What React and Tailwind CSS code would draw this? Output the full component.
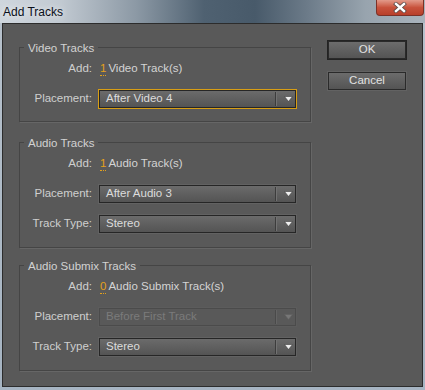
import React from 'react';

const font = { fontFamily: '"Liberation Sans", Arial, sans-serif' };

const Arrow = ({ disabled }) => (
  <svg width="9" height="6" viewBox="0 0 9 6" className="block">
    <path d="M0.5 0.5 H8.5 L4.5 5.5 Z" fill={disabled ? '#777777' : '#eeeeee'} stroke={disabled ? '#5f5f5f' : '#3a3a3a'} strokeWidth="0.6" />
  </svg>
);

const Select = ({ value, focused, disabled }) => (
  <div
    className={
      'w-[199px] h-[20px] p-px ' +
      (focused ? 'bg-[#d89e14]' : disabled ? 'bg-[#5c5c5c]' : 'bg-[#626262]')
    }
  >
    <div
      className={
        'h-full flex items-center border ' +
        (disabled
          ? 'border-[#4b4b4b] bg-[#595959] text-[#7b7b7b]'
          : 'border-[#262626] bg-gradient-to-b from-[#6b6b6b] to-[#545454] text-[#dcdcdc]')
      }
    >
      <span className="flex-1 pl-[6px] text-[11.5px] leading-none truncate">{value}</span>
      <div className={'w-px h-[14px] ' + (disabled ? 'bg-[#4a4a4a]' : 'bg-[#3c3c3c]')} />
      <div className={'w-px h-[14px] mr-[5px] ' + (disabled ? 'bg-[#646464]' : 'bg-[#727272]')} />
      <div className="w-[12px] flex justify-center mr-[1px]">
        <Arrow disabled={disabled} />
      </div>
    </div>
  </div>
);

const Row = ({ label, children }) => (
  <div className="flex items-center h-[20px]">
    <div className="w-[72px] text-right text-[11.5px] text-[#cfcfcf]">{label}</div>
    <div className="ml-[6px]">{children}</div>
  </div>
);

const AddRow = ({ count, what }) => (
  <Row label="Add:">
    <div className="flex items-center text-[11.5px] ml-[2px]">
      <span className="text-[#e4a11b] border-b border-dotted border-[#e4a11b] leading-[13px] mr-[2px]">{count}</span>
      <span className="text-[#d4d4d4]">{what}</span>
    </div>
  </Row>
);

const Group = ({ title, children, pb }) => (
  <div className={'relative border border-[#454545] shadow-[1px_1px_0_#666666] pt-[11px] ' + pb}>
    <span className="absolute -top-[7px] left-[4px] px-[4px] bg-[#595959] text-[11.5px] leading-[14px] text-[#d2d2d2]">
      {title}
    </span>
    <div className="flex flex-col gap-[10px]">{children}</div>
  </div>
);

const Button = ({ label, primary }) => (
  <div className={primary ? 'p-px bg-[#232323]' : 'p-px bg-[#626262]'}>
    <div className="w-[78px] h-[18px] border border-[#2a2a2a] bg-gradient-to-b from-[#6c6c6c] to-[#545454] flex items-center justify-center text-[11.5px] text-[#e2e2e2]">
      {label}
    </div>
  </div>
);

export default function App() {
  return (
    <div
      style={font}
      className="w-[425px] h-[390px] overflow-hidden bg-gradient-to-b from-[#b8c2cc] to-[#a6b4c2]"
    >
      {/* title bar */}
      <div className="h-[23px] flex items-start bg-[linear-gradient(90deg,#cfd6dd_0%,#c2cad2_14%,#8c99a5_32%,#4f6171_48%,#485a6a_60%,#6b7a88_72%,#98a4ae_86%,#a9b3bc_100%)]">
        <span className="pl-[3px] pt-[3px] text-[12px] text-[#0a0f1a] [text-shadow:0_0_6px_#ffffff]">Add Tracks</span>
        <div className="ml-auto mr-[1px] w-[48px] h-[16px] rounded-b-[4px] border border-t-0 border-[#7c3127] bg-gradient-to-b from-[#e29a8a] via-[#c8523c] to-[#b83f2a] flex items-center justify-center">
          <svg width="14" height="11" viewBox="0 0 14 11">
            <path d="M3 2 L11 9 M11 2 L3 9" stroke="#5a4a48" strokeWidth="4" strokeLinecap="square" />
            <path d="M3 2 L11 9 M11 2 L3 9" stroke="#ffffff" strokeWidth="2.4" strokeLinecap="square" />
          </svg>
        </div>
      </div>

      {/* window body */}
      <div className="mx-[2px] h-[364px] border border-[#2c2c2c] bg-[#595959] flex">
        <div className="w-[308px] pl-[16px] pt-[23px] flex flex-col gap-[20px]">
          <Group title="Video Tracks" pb="pb-[12px]">
            <AddRow count="1" what="Video Track(s)" />
            <Row label="Placement:">
              <Select value="After Video 4" focused />
            </Row>
          </Group>
          <Group title="Audio Tracks" pb="pb-[13px]">
            <AddRow count="1" what="Audio Track(s)" />
            <Row label="Placement:">
              <Select value="After Audio 3" />
            </Row>
            <Row label="Track Type:">
              <Select value="Stereo" />
            </Row>
          </Group>
          <div className="-mt-[3px]">
            <Group title="Audio Submix Tracks" pb="pb-[13px]">
              <AddRow count="0" what="Audio Submix Track(s)" />
              <Row label="Placement:">
                <Select value="Before First Track" disabled />
              </Row>
              <Row label="Track Type:">
                <Select value="Stereo" />
              </Row>
            </Group>
          </div>
        </div>
        <div className="ml-[16px] pt-[16px] flex flex-col gap-[11px]">
          <Button label="OK" primary />
          <Button label="Cancel" />
        </div>
      </div>
    </div>
  );
}
